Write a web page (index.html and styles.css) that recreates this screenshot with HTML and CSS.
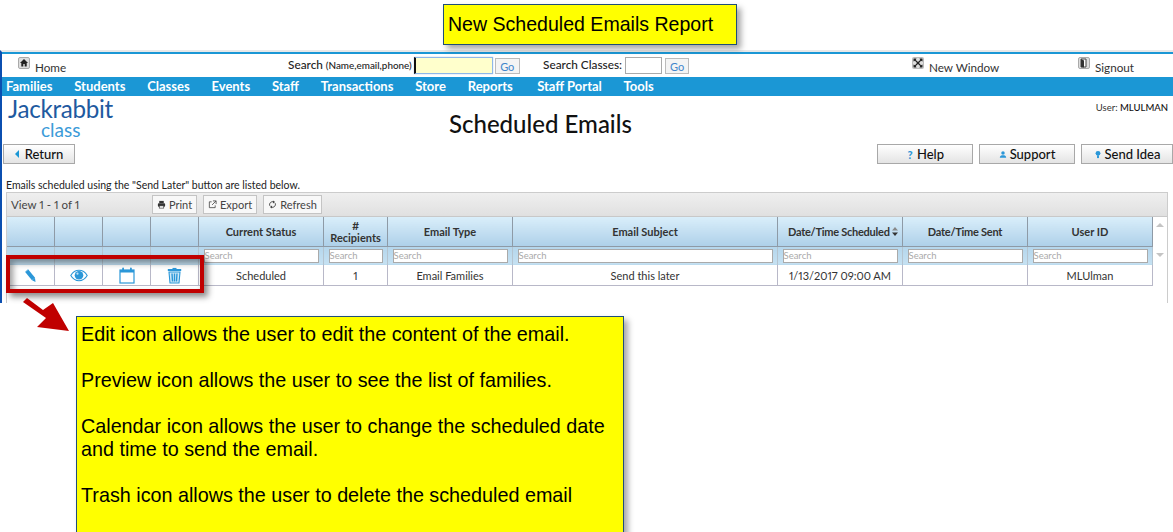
FILE: index.html
```html
<!DOCTYPE html>
<html lang="en">
<head>
<meta charset="utf-8">
<title>New Scheduled Emails Report</title>
<link rel="stylesheet" href="styles.css">
</head>
<body>
<div class="callout callout-title">New Scheduled Emails Report</div>

<div class="app">
  <div class="topbar">
    <a class="tool tool-home"><svg class="tool-ico" viewBox="0 0 12 12"><rect x=".5" y=".5" width="11" height="11" rx="1.5" fill="#ddd" stroke="#aaa"/><path d="M6 2 2 6h1.300v3.500h2V7h1.400v2.500h2V6H10z" fill="#222"/></svg><span>Home</span></a>
    <div class="search search-main">
      <label class="search-label">Search <small>(Name,email,phone)</small></label>
      <input class="field field-main" type="text">
      <button class="go">Go</button>
    </div>
    <div class="search search-classes">
      <label class="search-label">Search Classes:</label>
      <input class="field field-classes" type="text">
      <button class="go">Go</button>
    </div>
    <a class="tool tool-window"><svg class="tool-ico" viewBox="0 0 12 12"><rect x=".5" y=".5" width="11" height="11" rx="1" fill="#ddd" stroke="#bbb"/><path d="M1.500 1.500h3L3.800 3 6 5 8.200 3 7.500 1.500h3v3L9 3.800 7 6l2 2.200 1.500-.7v3h-3L8.200 9 6 7 3.800 9l.7 1.500h-3v-3L3 8.200 5 6 3 3.800l-1.500.7z" fill="#222"/></svg><span>New Window</span></a>
    <a class="tool tool-signout"><svg class="tool-ico" viewBox="0 0 12 12"><rect x=".5" y=".5" width="11" height="11" rx="1.500" fill="#ddd" stroke="#aaa"/><path d="M3 2h5v8H3z" fill="#fff" stroke="#444"/><path d="M3 2l3 1.500v7L3 10z" fill="#333"/></svg><span>Signout</span></a>
  </div>

  <nav class="nav">
    <a>Families</a><a>Students</a><a>Classes</a><a>Events</a><a>Staff</a><a>Transactions</a><a>Store</a><a>Reports</a><a class="nav-portal">Staff Portal</a><a>Tools</a>
  </nav>

  <header class="masthead">
    <div class="logo">
      <div class="logo-main">Jackrabbit</div>
      <div class="logo-sub">class</div>
    </div>
    <h1 class="page-title">Scheduled Emails</h1>
    <div class="user">User: <b>MLULMAN</b></div>
  </header>

  <div class="actions">
    <button class="btn btn-return"><i class="tri"></i>Return</button>
    <div class="actions-right">
      <button class="btn"><span class="btn-ico">?</span>Help</button>
      <button class="btn"><svg class="btn-svg" viewBox="0 0 10 10"><circle cx="5" cy="3" r="2.200" fill="#2b97d8"/><path d="M1 9c0-2.500 2-3 4-3s4 .5 4 3z" fill="#2b97d8"/></svg>Support</button>
      <button class="btn btn-idea"><svg class="btn-svg" viewBox="0 0 10 10"><circle cx="5" cy="3.500" r="3" fill="#2b97d8"/><rect x="3.800" y="6" width="2.400" height="3.500" fill="#2b97d8"/></svg>Send Idea</button>
    </div>
  </div>

  <p class="intro">Emails scheduled using the "Send Later" button are listed below.</p>

  <section class="grid">
    <div class="grid-toolbar">
      <span class="view">View 1 - 1 of 1</span>
      <button class="tb tb-print"><svg class="tb-ico" viewBox="0 0 10 10"><path d="M2.500 1h5v2.500h-5z" fill="#333"/><rect x="1" y="3.500" width="8" height="4" rx="1" fill="#333"/><rect x="2.500" y="6.500" width="5" height="2.500" fill="#fff" stroke="#333" stroke-width=".7"/></svg>Print</button>
      <button class="tb tb-export"><svg class="tb-ico" viewBox="0 0 10 10"><path d="M4 2H1.500v6.500H8V6M5.500 1H9v3.500M9 1 4.500 5.500" fill="none" stroke="#444" stroke-width=".9"/></svg>Export</button>
      <button class="tb tb-refresh"><svg class="tb-ico" viewBox="0 0 10 10"><path d="M2 6.500a3.300 3.300 0 0 1 4.500-4.300M8 3.500a3.300 3.300 0 0 1-4.500 4.300" fill="none" stroke="#444"/><path d="M5.500.5 8 2.300 5.500 4zM4.500 6 2 7.700l2.500 1.800z" fill="#444"/></svg>Refresh</button>
    </div>
    <div class="grid-body">
      <table class="table">
        <colgroup>
          <col class="c-icon-first"><col class="c-icon"><col class="c-icon"><col class="c-icon">
          <col class="c-status"><col class="c-rec"><col class="c-type"><col class="c-subject"><col class="c-date"><col class="c-date"><col class="c-date">
        </colgroup>
        <thead>
          <tr class="head">
            <th></th><th></th><th></th><th></th>
            <th>Current Status</th><th># <br>Recipients</th><th>Email Type</th><th>Email Subject</th>
            <th class="th-date th-sorted">Date/Time Scheduled <svg class="sort" viewBox="0 0 6 9"><path d="M3 0 6 3.500H0z" fill="#888"/><path d="M3 9 0 5.500h6z" fill="#333"/></svg></th>
            <th class="th-date">Date/Time Sent</th><th>User ID</th>
          </tr>
          <tr class="filter">
            <th></th><th></th><th></th><th></th>
            <th><input class="find" placeholder="Search"></th><th><input class="find" placeholder="Search"></th><th><input class="find" placeholder="Search"></th><th><input class="find" placeholder="Search"></th><th><input class="find" placeholder="Search"></th><th><input class="find" placeholder="Search"></th><th><input class="find" placeholder="Search"></th>
          </tr>
        </thead>
        <tbody>
          <tr class="row">
            <td><svg class="ico" viewBox="0 0 15 15"><path d="M3.500 2.500 10.500 11" stroke="#2b97d8" stroke-width="4"/><path d="M9 12.300 12 9.800 12.500 14z" fill="#2b97d8"/><path d="M2 4 5 1.500" stroke="#bfe2f7" stroke-width=".7"/></svg></td>
            <td><svg class="ico ico-eye" viewBox="0 0 18 12"><path d="M.8 6C3 2.300 6 .8 9 .8s6 1.500 8.200 5.200C15 9.700 12 11.200 9 11.200S3 9.700.8 6z" fill="none" stroke="#2b97d8" stroke-width="1.100"/><circle cx="9" cy="5.700" r="4.300" fill="#2b97d8"/><circle cx="7.500" cy="4.200" r="1.100" fill="#bfe2f7"/></svg></td>
            <td><svg class="ico ico-cal" viewBox="0 0 16 17"><rect x="1" y="3" width="14" height="13" fill="#fff" stroke="#2b97d8" stroke-width="1.200"/><rect x="1" y="3" width="14" height="2.500" fill="#2b97d8"/><rect x="3.200" y=".5" width="1.800" height="4" rx=".9" fill="#2b97d8"/><rect x="11" y=".5" width="1.800" height="4" rx=".9" fill="#2b97d8"/></svg></td>
            <td><svg class="ico ico-trash" viewBox="0 0 15 17"><path d="M5.500 1.500h4" stroke="#2b97d8" stroke-width="1.200"/><rect x=".8" y="2" width="13.400" height="2" fill="#2b97d8"/><path d="M2 5h11l-1 11H3z" fill="#cfe9f8" stroke="#2b97d8" stroke-width="1.100"/><path d="M5 6.500 5.500 14.500M7.500 6.500v8M10 6.500 9.500 14.500" stroke="#2b97d8" stroke-width="1.400"/></svg></td>
            <td>Scheduled</td><td>1</td><td>Email Families</td><td>Send this later</td><td class="td-date">1/13/2017 09:00 AM</td><td></td><td>MLUlman</td>
          </tr>
        </tbody>
      </table>
      <div class="scroller"><i class="sc-up"></i><i class="sc-down"></i></div>
    </div>
  </section>
</div>

<div class="redbox"></div>
<svg class="arrow" viewBox="0 0 47 34"><path d="M0 4 4 0 20 12 30 5 46 33 14 29 23 20z" fill="#c00000"/></svg>

<div class="callout callout-notes">
  <p>Edit icon allows the user to edit the content of the email.</p>
  <p>Preview icon allows the user to see the list of families.</p>
  <p>Calendar icon allows the user to change the scheduled date and time to send the email.</p>
  <p>Trash icon allows the user to delete the scheduled email</p>
</div>
</body>
</html>
```

FILE: styles.css
```css
* { box-sizing: border-box; }
html, body { margin: 0; padding: 0; height: 532px; overflow: hidden; background: #fff; }
body { position: relative; font-family: Lato, "Liberation Sans", sans-serif; color: #222; font-variant-numeric: proportional-nums; }

.callout {
  position: absolute;
  background: #ff0;
  border: 1px solid #1f4e79;
  box-shadow: 4px 4px 6px rgba(0, 0, 0, .35);
  font-family: "Liberation Sans", Arial, sans-serif;
  color: #000;
  z-index: 3;
}
.callout-title { left: 443px; top: 4px; width: 294px; height: 41px; padding: 7px 4px; font-size: 19.560px; line-height: 24px; }
.callout-notes { left: 76px; top: 316px; width: 548px; height: 240px; padding: 6px 4px; font-size: 19.750px; line-height: 23px; }
.callout-notes p { margin: 0 0 23px; }

.app {
  margin-top: 50px;
  height: 253px;
  border-left: 2px solid #0b4fb0;
  border-top: 2px solid #e8e8e8;
}

.topbar { height: 25px; border-top: 2px solid #1b97d5; position: relative; display: flex; align-items: flex-start; }
.tool { display: flex; align-items: center; gap: 5px; font-size: 11.700px; color: #333; padding-top: 6px; line-height: 14px; }
.tool-ico { width: 12px; height: 12px; margin-top: -9px; }
.tool-home { margin-left: 16px; width: 270px; }
.tool-window { margin-left: 223px; width: 166px; }
.search { display: flex; align-items: flex-start; padding-top: 3px; }
.search-label { font-size: 11.800px; font-weight: 500; color: #222; line-height: 16px; white-space: nowrap; }
.search-label small { font-size: 9.900px; }
.search-main { width: 255px; }
.search-classes { width: 146px; }
.field { height: 17px; margin-left: 2px; border: 1px solid #aaa; padding: 0; background: #fff; }
.field-main { width: 79px; background: #ffc; border: 1px solid #8fb8e8; border-left: 2px solid #111; box-shadow: 0 0 1px #8fb8e8; }
.field-classes { width: 37px; margin-left: 3px; }
.go { height: 16px; margin: 1px 0 0 3px; padding: 0; background: #f4f4f4; border: 1px solid #bbb; color: #3f86cc; font: 11px Lato, sans-serif; width: 25px; }
.search-main .go { margin-left: 2px; }

.nav { height: 19px; background: #1b97d5; display: flex; gap: 21.800px; padding: 0 0 1px 4px; align-items: center; }
.nav a { color: #fff; font-weight: 700; font-size: 13px; white-space: nowrap; }
.nav .nav-portal { margin-left: 2.500px; }

.masthead { height: 48px; display: flex; align-items: flex-start; position: relative; }
.logo { width: 447px; padding-left: 6px; }
.logo-main { font-size: 24.200px; line-height: 24px; color: #1e5aa0; font-weight: 400; height: 24px; letter-spacing: -.3px; margin-top: 1px; }
.logo-sub { font-size: 19px; line-height: 20px; color: #3b9bd8; margin-left: 33px; margin-top: -1px; }
.page-title { margin: 15px 0 0; font-size: 24px; line-height: 26px; font-weight: 500; color: #111; white-space: nowrap; }
.user { margin-left: auto; padding: 7px 5px 0 0; font-size: 9.500px; line-height: 10px; color: #333; }
.user b { color: #111; font-weight: 500; }

.actions { display: flex; justify-content: space-between; height: 20px; padding-left: 1px; }
.actions-right { display: flex; gap: 6px; }
.btn { width: 96px; height: 20px; display: flex; align-items: center; justify-content: center; gap: 3px; padding: 0; border: 1px solid #a8a8a8; background: linear-gradient(#fff, #e4e4e4); font: 500 13px Lato, sans-serif; color: #111; }
.btn-return { width: 72px; gap: 6px; }
.btn-idea { width: 92px; }
.btn-ico { color: #2b97d8; font-size: 11px; font-weight: 900; width: 8px; }
.btn-svg { width: 8px; height: 9px; }
.tri { width: 0; height: 0; border: 4px solid transparent; border-left: 0; border-right: 4px solid #1b97d5; }

.intro { margin: 15px 0 0 4px; font-size: 10.500px; line-height: 13px; color: #222; height: 13px; white-space: nowrap; }

.grid { margin: 0 0 0 4px; width: 1162px; height: 111px; border: 1px solid #ccc; border-bottom: 0; }
.grid-toolbar { height: 24px; display: flex; align-items: center; background: linear-gradient(#efefef, #e0e0e0); border-bottom: 1px solid #c8c8c8; padding-left: 4px; }
.view { width: 141px; font-size: 11.500px; color: #444; }
.tb { height: 19px; display: flex; align-items: center; justify-content: center; gap: 3px; padding: 0; background: #f8f8f8; border: 1px solid #c4c4c4; font: 11px Lato, sans-serif; color: #444; }
.tb-print { width: 45px; }
.tb-export { width: 54px; margin-left: 6px; }
.tb-refresh { width: 59px; margin-left: 6px; }
.tb-ico { width: 9px; height: 9px; }

.grid-body { display: flex; align-items: flex-start; }
.table { border-collapse: collapse; table-layout: fixed; width: 1145px; font-size: 11px; }
.c-icon-first { width: 47px; }
.c-icon { width: 48px; }
.c-status { width: 125px; }
.c-rec { width: 64px; }
.c-type { width: 125px; }
.c-subject { width: 265px; }
.c-date { width: 125px; }
.head th { height: 29px; padding: 1px 0 0 1px; background: linear-gradient(#d9eefa, #aed0e9); border: 1px solid #8e9aa6; border-width: 0 1px 1px 0; font-weight: 700; color: #333; line-height: 12px; font-size: 11px; white-space: nowrap; }
.head .th-date { letter-spacing: -.26px; }
.head .th-sorted { padding-left: 7px; }
.filter th { height: 19px; padding: 0 4px 0 5px; background: linear-gradient(#b4d6ec, #c6e1f2); border-right: 1px solid #b4c4d0; }
.find { display: block; width: 100%; height: 14px; border: 1px solid #aaa; background: #fff; padding: 0; font: 9.500px Lato, sans-serif; }
.find::placeholder { color: #aaa; opacity: 1; }
.sort { width: 6px; height: 9px; }
.row td { height: 20px; padding: 1px 0 0 1px; text-align: center; border: 1px solid #b8b8c8; border-width: 0 1px 1px 0; color: #333; background: #fff; font-size: 11px; }
.row td:first-child { border-left: 0; }
.ico { width: 15px; height: 15px; display: block; margin: 0 auto; }
.ico-eye { width: 18px; height: 13px; }
.ico-cal { width: 16px; height: 17px; }
.ico-trash { width: 15px; height: 17px; }
.scroller { width: 15px; height: 48px; position: relative; }
.sc-up, .sc-down { position: absolute; left: 3px; width: 0; height: 0; border: 4px solid transparent; }
.sc-up { top: 6px; border-bottom-color: #c4c4c4; border-top: 0; }
.sc-down { top: 36px; border-top-color: #c4c4c4; border-bottom: 0; }

.redbox { position: absolute; left: 6px; top: 255px; width: 198px; height: 38px; border: 4px solid #c00000; box-shadow: 4px 4px 6px rgba(0, 0, 0, .45), inset 3px 4px 6px rgba(0, 0, 0, .4); z-index: 2; }
.arrow { position: absolute; left: 23px; top: 298px; width: 47px; height: 34px; z-index: 2; }
```
